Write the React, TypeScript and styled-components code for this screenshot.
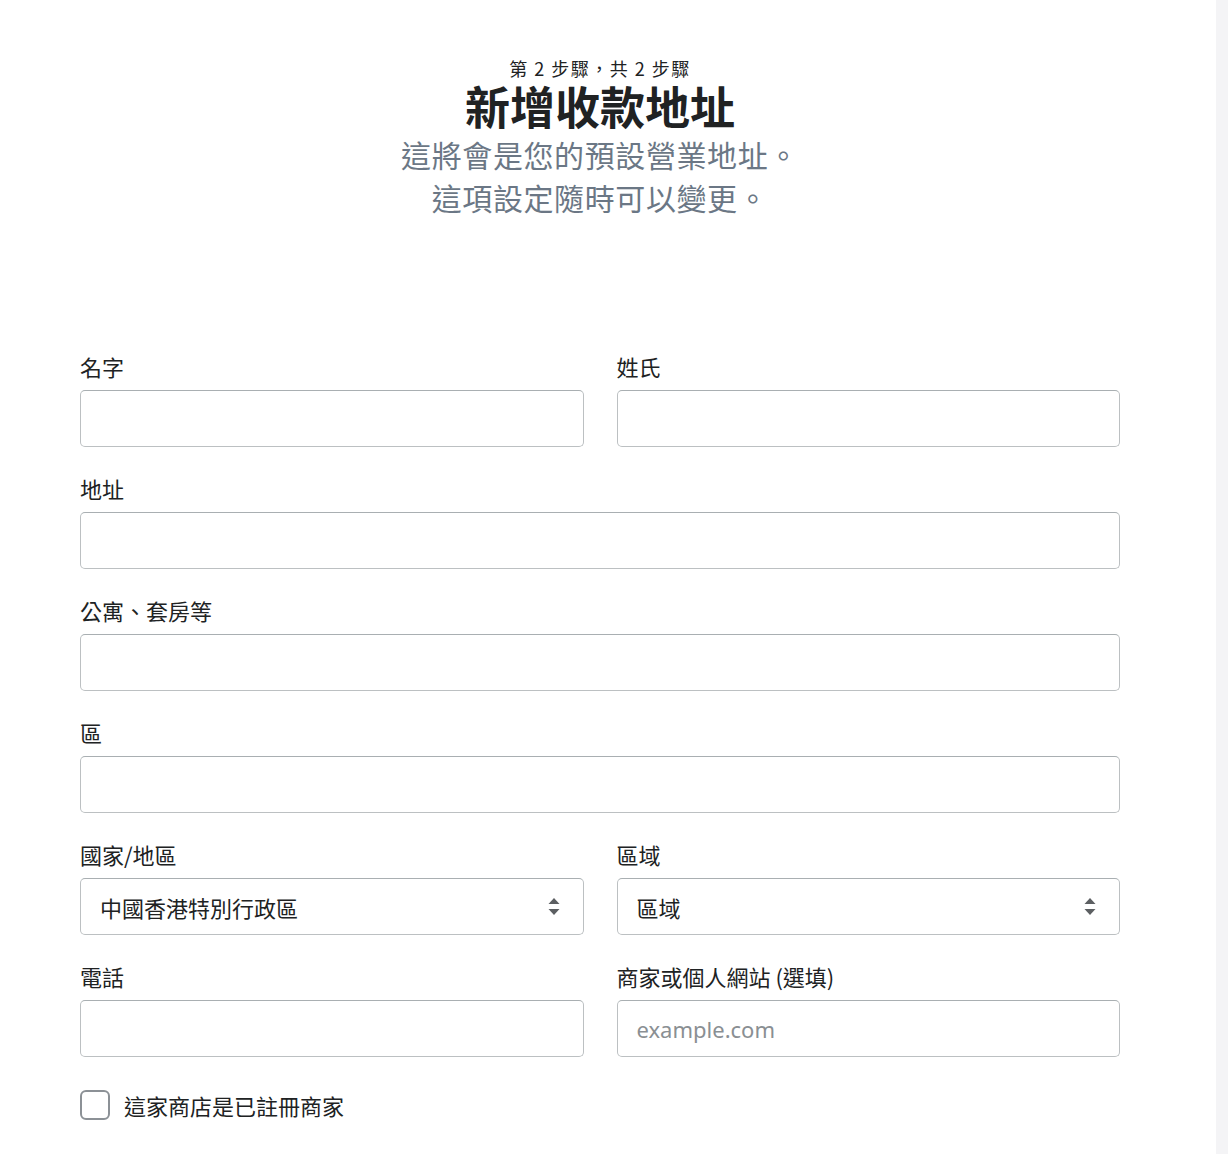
import React from "react";
import styled, { createGlobalStyle } from "styled-components";

const Global = createGlobalStyle`
  html, body { margin: 0; padding: 0; background: #ffffff; }
  body { font-family: "Noto Sans CJK TC", "Noto Sans", sans-serif; color: #202223; }
  * { box-sizing: border-box; }
`;

const Page = styled.div`
  display: flex;
  min-height: 1154px;
`;

const Main = styled.main`
  flex: 1;
  padding: 56px 0 0 80px;
`;

const Strip = styled.div`
  width: 12px;
  background: #f4f4f6;
`;

const Container = styled.div`
  width: 1040px;
`;

const Header = styled.header`
  display: flex;
  flex-direction: column;
  align-items: center;
  text-align: center;
`;

const Step = styled.div`
  font-size: 18px;
  line-height: 24px;
  letter-spacing: 1.5px;
  color: #202223;
`;

const Title = styled.h1`
  margin: 0;
  font-size: 45px;
  line-height: 52px;
  font-weight: 700;
  color: #202223;
`;

const Subtitle = styled.p`
  margin: 1px 0 0;
  font-size: 30px;
  line-height: 43px;
  color: #6b7785;
  letter-spacing: 0.6px;
`;

const Form = styled.form`
  margin-top: 132px;
  display: grid;
  grid-template-columns: 1fr 1fr;
  column-gap: 33px;
  row-gap: 26px;
`;

const Field = styled.div<{ $full?: boolean }>`
  display: flex;
  flex-direction: column;
  grid-column: ${(p) => (p.$full ? "1 / -1" : "auto")};
`;

const Label = styled.label`
  font-size: 22px;
  line-height: 30px;
  margin-bottom: 9px;
  color: #202223;
`;

const Input = styled.input`
  height: 57px;
  width: 100%;
  border: 1px solid #bcc0c2;
  border-top-color: #a9afb2;
  border-radius: 5px;
  padding: 0 19px;
  font-family: "Noto Sans", "Noto Sans CJK TC", sans-serif;
  font-size: 22px;
  color: #202223;
  background: #fff;
  outline: none;
  &::placeholder { color: #8a8f93; }
`;

const SelectBox = styled.div`
  height: 57px;
  display: flex;
  align-items: center;
  justify-content: space-between;
  border: 1px solid #bcc0c2;
  border-top-color: #a9afb2;
  border-radius: 5px;
  padding: 0 22px 0 19px;
  font-size: 22px;
  color: #202223;
  background: #fff;
`;

const CheckRow = styled.div`
  margin-top: 33px;
  display: flex;
  align-items: center;
  gap: 14px;
`;

const Box = styled.span`
  width: 30px;
  height: 30px;
  border: 2px solid #8c9196;
  border-radius: 6px;
  background: #fff;
`;

const CheckLabel = styled.span`
  font-size: 22px;
  line-height: 30px;
  color: #202223;
`;

const Arrows = () => (
  <svg width="14" height="22" viewBox="0 0 14 22">
    <path d="M7 2 L12.5 8 L1.5 8 Z" fill="#5c5f62" />
    <path d="M1.5 13 L12.5 13 L7 19 Z" fill="#5c5f62" />
  </svg>
);

const Select = ({ value }: { value: string }) => (
  <SelectBox>
    <span>{value}</span>
    <Arrows />
  </SelectBox>
);

export default function App() {
  return (
    <Page>
      <Global />
      <Main>
        <Container>
          <Header>
            <Step>第 2 步驟，共 2 步驟</Step>
            <Title>新增收款地址</Title>
            <Subtitle>
              這將會是您的預設營業地址。
              <br />
              這項設定隨時可以變更。
            </Subtitle>
          </Header>
          <Form>
            <Field>
              <Label>名字</Label>
              <Input />
            </Field>
            <Field>
              <Label>姓氏</Label>
              <Input />
            </Field>
            <Field $full>
              <Label>地址</Label>
              <Input />
            </Field>
            <Field $full>
              <Label>公寓、套房等</Label>
              <Input />
            </Field>
            <Field $full>
              <Label>區</Label>
              <Input />
            </Field>
            <Field>
              <Label>國家/地區</Label>
              <Select value="中國香港特別行政區" />
            </Field>
            <Field>
              <Label>區域</Label>
              <Select value="區域" />
            </Field>
            <Field>
              <Label>電話</Label>
              <Input />
            </Field>
            <Field>
              <Label>商家或個人網站 (選填)</Label>
              <Input placeholder="example.com" />
            </Field>
          </Form>
          <CheckRow>
            <Box />
            <CheckLabel>這家商店是已註冊商家</CheckLabel>
          </CheckRow>
        </Container>
      </Main>
      <Strip />
    </Page>
  );
}
